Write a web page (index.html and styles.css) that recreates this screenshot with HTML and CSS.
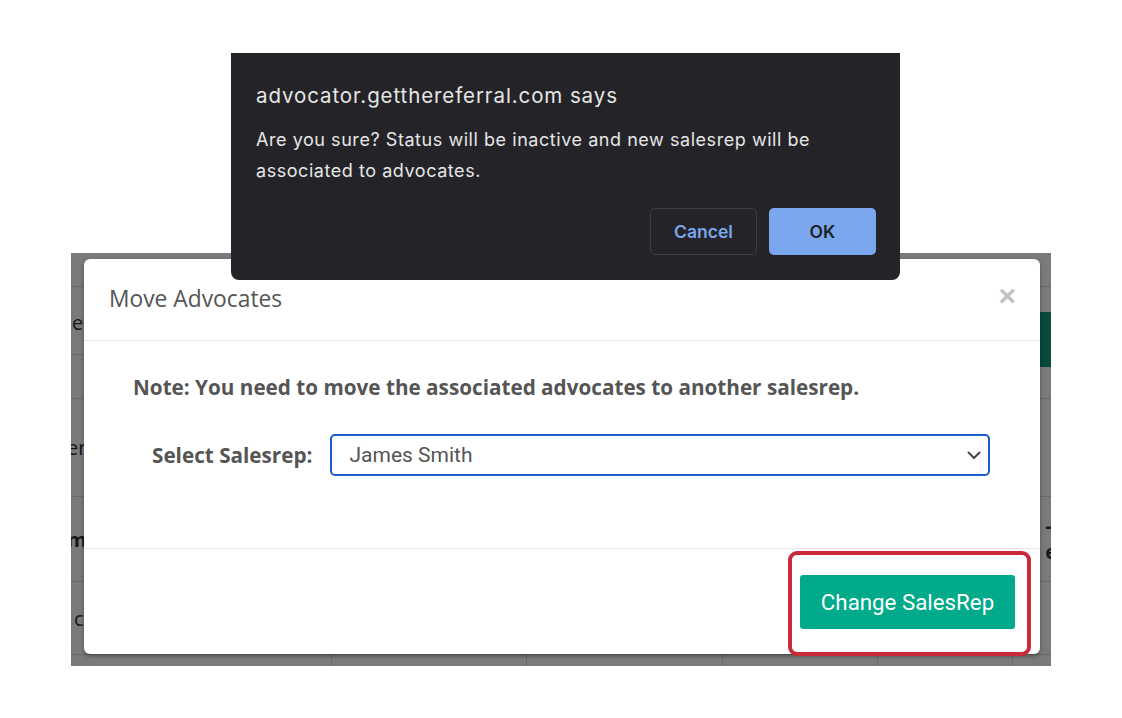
FILE: index.html
```html
<!DOCTYPE html>
<html lang="en">
<head>
    <meta charset="UTF-8">
    <title>Move Advocates</title>
    <link rel="stylesheet" href="styles.css">
</head>
<body>
    <div class="screen">
        <!-- page behind the modal -->
        <div class="app">
            <div class="bg-rows">
                <div class="bg-row r1"></div>
                <div class="bg-row r2">
                    <span class="bg-text">le</span>
                    <span class="bg-btn"></span>
                </div>
                <div class="bg-row r3"></div>
                <div class="bg-row r4"><span class="bg-text">er</span></div>
                <div class="bg-row r5">
                    <span class="bg-text bold">m</span>
                    <span class="bg-text bold right">-<br>e</span>
                </div>
                <div class="bg-row r6"><span class="bg-text"><i class="dot"></i>c</span></div>
                <div class="bg-row r7">
                    <span class="col c1"></span><span class="col c2"></span><span class="col c3"></span>
                    <span class="col c4"></span><span class="col c5"></span>
                </div>
            </div>
            <div class="overlay"></div>

            <div class="modal">
                <div class="modal-header">
                    <h4 class="modal-title">Move Advocates</h4>
                    <span class="close">&times;</span>
                </div>
                <div class="modal-body">
                    <p class="note">Note: You need to move the associated advocates to another salesrep.</p>
                    <div class="form-row">
                        <label class="form-label">Select Salesrep:</label>
                        <div class="select">
                            <span>James Smith</span>
                            <svg width="14" height="9" viewBox="0 0 14 9"><path d="M1.5 1.5 L7 7 L12.5 1.5" fill="none" stroke="#444" stroke-width="2" stroke-linecap="round" stroke-linejoin="round"/></svg>
                        </div>
                    </div>
                </div>
                <div class="modal-footer">
                    <div class="highlight">
                        <button class="btn-green">Change SalesRep</button>
                    </div>
                </div>
            </div>
        </div>

        <!-- browser confirm dialog -->
        <div class="alert">
            <div class="alert-title">advocator.getthereferral.com says</div>
            <div class="alert-msg">Are you sure? Status will be inactive and new salesrep will be associated to advocates.</div>
            <div class="alert-actions">
                <button class="alert-btn cancel">Cancel</button>
                <button class="alert-btn ok">OK</button>
            </div>
        </div>
    </div>
</body>
</html>
```

FILE: styles.css
```css
* {
    margin: 0;
    padding: 0;
    box-sizing: border-box;
}

body {
    background: #ffffff;
    font-family: "Open Sans", sans-serif;
    overflow: hidden;
}

.screen {
    position: relative;
    width: 1122px;
    height: 718px;
    padding: 253px 0 0 71px;
}

/* Background page */
.app {
    position: relative;
    width: 980px;
    height: 413px;
    overflow: hidden;
    background: #fff;
}

.bg-rows {
    display: flex;
    flex-direction: column;
    height: 100%;
}

.bg-row {
    display: flex;
    justify-content: space-between;
    border-bottom: 1px solid #ddd;
    color: #333;
    font-size: 20px;
}

.r1 { height: 34px; }
.r2 { height: 68px; align-items: flex-start; padding-top: 25px; }
.r3 { height: 44px; }
.r4 { height: 98px; align-items: center; }
.r5 { height: 85px; align-items: center; }
.r6 { height: 72px; align-items: center; border-bottom: none; }
.r7 { flex: 1; border-bottom: none; border-top: 1px solid #ddd; justify-content: flex-start; }

.r2 .bg-text { margin-top: -3px; }

.bg-text {
    margin-left: -4px;
}

.bg-text.bold {
    font-weight: 700;
}

.bg-text.right {
    margin-right: -6px;
    line-height: 1.3;
}

.dot {
    display: inline-block;
    width: 4px;
    height: 8px;
    background: #e23b3b;
    margin-right: 3px;
}

.bg-btn {
    width: 40px;
    height: 55px;
    background: #0f9e7e;
}

.col {
    border-right: 1px solid #ddd;
    height: 100%;
}

.c1 { width: 261px; }
.c2 { width: 195px; }
.c3 { width: 196px; }
.c4 { width: 155px; }
.c5 { width: 135px; }

.overlay {
    position: absolute;
    inset: 0;
    background: rgba(0, 0, 0, 0.52);
}

/* Modal */
.modal {
    position: absolute;
    left: 13px;
    top: 6px;
    width: 956px;
    height: 395px;
    background: #fff;
    border-radius: 6px;
    box-shadow: 0 2px 4px rgba(0, 0, 0, 0.35);
    display: flex;
    flex-direction: column;
}

.modal-header {
    height: 82px;
    display: flex;
    justify-content: space-between;
    align-items: center;
    padding: 0 24px 0 25px;
    border-bottom: 1px solid #e5e5e5;
}

.modal-title {
    font-size: 22.8px;
    font-weight: 400;
    color: #555;
    margin-top: -2px;
}

.close {
    font-family: "Liberation Sans", sans-serif;
    font-size: 30px;
    font-weight: 700;
    color: #c2c2c2;
    margin-top: -8px;
}

.modal-body {
    height: 208px;
    padding: 32px 0 0 49px;
    border-bottom: 1px solid #e5e5e5;
}

.note {
    font-size: 20.7px;
    font-weight: 700;
    color: #555;
}

.form-row {
    display: flex;
    align-items: center;
    margin-top: 33px;
    padding-left: 19px;
}

.form-label {
    font-size: 20.7px;
    font-weight: 700;
    color: #555;
    margin-right: 18px;
}

.select {
    width: 660px;
    height: 42px;
    border: 2px solid #1a5ccc;
    border-radius: 5px;
    display: flex;
    justify-content: space-between;
    align-items: center;
    padding: 0 7px 0 17px;
    font-family: Roboto, sans-serif;
    font-size: 21px;
    color: #555;
}

.modal-footer {
    flex: 1;
    display: flex;
    justify-content: flex-end;
    align-items: flex-start;
    padding: 2px 9px 0 0;
}

.highlight {
    border: 4px solid #c92a39;
    border-radius: 9px;
    padding: 20px 12px 23px 8px;
    background: #fff;
    position: relative;
    z-index: 1;
    margin-bottom: -2px;
}

.btn-green {
    width: 215px;
    height: 54px;
    border: none;
    border-radius: 3px;
    background: #00aa8a;
    color: #fff;
    font-family: Roboto, sans-serif;
    font-size: 22.3px;
}

/* Confirm dialog */
.alert {
    position: absolute;
    left: 231px;
    top: 53px;
    width: 669px;
    height: 227px;
    background: #242428;
    border-radius: 0 0 8px 8px;
    padding: 30px 24px 0 25px;
    font-family: Inter, sans-serif;
    color: #e6e6e6;
}

.alert-title {
    font-size: 20.5px;
    letter-spacing: 0.9px;
    line-height: 26px;
}

.alert-msg {
    font-size: 18px;
    letter-spacing: 0.55px;
    line-height: 31px;
    margin-top: 15px;
    width: 600px;
}

.alert-actions {
    display: flex;
    justify-content: flex-end;
    gap: 12px;
    margin-top: 22px;
}

.alert-btn {
    width: 107px;
    height: 47px;
    border-radius: 5px;
    font-family: Inter, sans-serif;
    font-size: 17.5px;
    font-weight: 600;
}

.cancel {
    background: #242428;
    border: 1px solid #3d3d42;
    color: #7aa6ea;
}

.ok {
    background: #7ba7ef;
    border: none;
    color: #202124;
}
```
